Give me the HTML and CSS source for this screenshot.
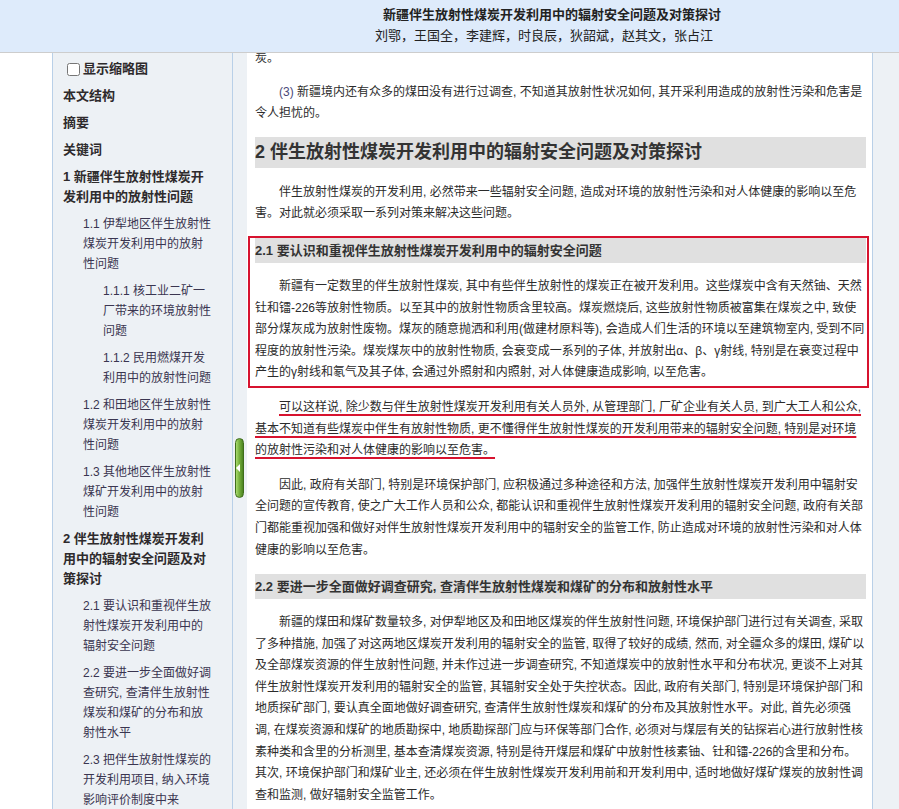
FILE: index.html
```html
<!DOCTYPE html>
<html lang="zh-CN">
<head>
<meta charset="utf-8">
<title>新疆伴生放射性煤炭开发利用中的辐射安全问题及对策探讨</title>
<link rel="stylesheet" href="styles.css">
</head>
<body>
<header class="topbar">
  <div class="title">新疆伴生放射性煤炭开发利用中的辐射安全问题及对策探讨</div>
  <div class="authors">刘鄂，王国全，李建辉，时良辰，狄韶斌，赵其文，张占江</div>
</header>
<div class="workspace">
  <div class="gutter"></div>
  <nav class="toc">
    <label class="toc-item lvl1 check"><input type="checkbox">显示缩略图</label>
    <a class="toc-item lvl1" href="#">本文结构</a>
    <a class="toc-item lvl1" href="#">摘要</a>
    <a class="toc-item lvl1" href="#">关键词</a>
    <a class="toc-item lvl1" href="#">1 新疆伴生放射性煤炭开发利用中的放射性问题</a>
    <a class="toc-item lvl2" href="#">1.1 伊犁地区伴生放射性煤炭开发利用中的放射性问题</a>
    <a class="toc-item lvl3" href="#">1.1.1 核工业二矿一厂带来的环境放射性问题</a>
    <a class="toc-item lvl3" href="#">1.1.2 民用燃煤开发利用中的放射性问题</a>
    <a class="toc-item lvl2" href="#">1.2 和田地区伴生放射性煤炭开发利用中的放射性问题</a>
    <a class="toc-item lvl2" href="#">1.3 其他地区伴生放射性煤矿开发利用中的放射性问题</a>
    <a class="toc-item lvl1" href="#">2 伴生放射性煤炭开发利用中的辐射安全问题及对策探讨</a>
    <a class="toc-item lvl2" href="#">2.1 要认识和重视伴生放射性煤炭开发利用中的辐射安全问题</a>
    <a class="toc-item lvl2" href="#">2.2 要进一步全面做好调查研究, 查清伴生放射性煤炭和煤矿的分布和放射性水平</a>
    <a class="toc-item lvl2" href="#">2.3 把伴生放射性煤炭的开发利用项目, 纳入环境影响评价制度中来</a>
  </nav>
  <div class="splitter"><div class="handle"><span class="arrow"></span></div></div>
  <main class="article">
    <p class="cont">炭。</p>
    <p><span class="num">(3)</span> 新疆境内还有众多的煤田没有进行过调查, 不知道其放射性状况如何, 其开采利用造成的放射性污染和危害是<br>令人担忧的。</p>
    <h3>2 伴生放射性煤炭开发利用中的辐射安全问题及对策探讨</h3>
    <p>伴生放射性煤炭的开发利用, 必然带来一些辐射安全问题, 造成对环境的放射性污染和对人体健康的影响以至危<br>害。对此就必须采取一系列对策来解决这些问题。</p>
    <section class="focus">
      <h4>2.1 要认识和重视伴生放射性煤炭开发利用中的辐射安全问题</h4>
      <p>新疆有一定数里的伴生放射性煤炭, 其中有些伴生放射性的煤炭正在被开发利用。这些煤炭中含有天然铀、天然<br>钍和镭-226等放射性物质。以至其中的放射性物质含里较高。煤炭燃烧后, 这些放射性物质被富集在煤炭之中, 致使<br>部分煤灰成为放射性废物。煤灰的随意抛洒和利用(做建材原料等), 会造成人们生活的环境以至建筑物室内, 受到不同<br>程度的放射性污染。煤炭煤灰中的放射性物质, 会衰变成一系列的子体, 并放射出α、β、γ射线, 特别是在衰变过程中<br>产生的γ射线和氡气及其子体, 会通过外照射和内照射, 对人体健康造成影响, 以至危害。</p>
    </section>
    <p><span class="mark">可以这样说, 除少数与伴生放射性煤炭开发利用有关人员外, 从管理部门, 厂矿企业有关人员, 到广大工人和公众,<br>基本不知道有些煤炭中伴生有放射性物质, 更不懂得伴生放射性煤炭的开发利用带来的辐射安全问题, 特别是对环境<br>的放射性污染和对人体健康的影响以至危害。</span></p>
    <p>因此, 政府有关部门, 特别是环境保护部门, 应积极通过多种途径和方法, 加强伴生放射性煤炭开发利用中辐射安<br>全问题的宣传教育, 使之广大工作人员和公众, 都能认识和重视伴生放射性煤炭开发利用的辐射安全问题, 政府有关部<br>门都能重视加强和做好对伴生放射性煤炭开发利用中的辐射安全的监管工作, 防止造成对环境的放射性污染和对人体<br>健康的影响以至危害。</p>
    <h4>2.2 要进一步全面做好调查研究, 查清伴生放射性煤炭和煤矿的分布和放射性水平</h4>
    <p>新疆的煤田和煤矿数量较多, 对伊犁地区及和田地区煤炭的伴生放射性问题, 环境保护部门进行过有关调查, 采取<br>了多种措施, 加强了对这两地区煤炭开发利用的辐射安全的监管, 取得了较好的成绩, 然而, 对全疆众多的煤田, 煤矿以<br>及全部煤炭资源的伴生放射性问题, 并未作过进一步调查研究, 不知道煤炭中的放射性水平和分布状况, 更谈不上对其<br>伴生放射性煤炭开发利用的辐射安全的监管, 其辐射安全处于失控状态。因此, 政府有关部门, 特别是环境保护部门和<br>地质探矿部门, 要认真全面地做好调查研究, 查清伴生放射性煤炭和煤矿的分布及其放射性水平。对此, 首先必须强<br>调, 在煤炭资源和煤矿的地质勘探中, 地质勘探部门应与环保等部门合作, 必须对与煤层有关的钻探岩心进行放射性核<br>素种类和含里的分析测里, 基本查清煤炭资源, 特别是待开煤层和煤矿中放射性核素铀、钍和镭-226的含里和分布。<br>其次, 环境保护部门和煤矿业主, 还必须在伴生放射性煤炭开发利用前和开发利用中, 适时地做好煤矿煤炭的放射性调<br>查和监测, 做好辐射安全监管工作。</p>
  </main>
  <div class="gutter-right"></div>
</div>
</body>
</html>
```

FILE: styles.css
```css
* {
  box-sizing: border-box;
}

html,
body {
  margin: 0;
  height: 100%;
}

body {
  font-family: "Liberation Sans", "Noto Sans CJK SC", sans-serif;
  color: #2b2b2b;
  background: #ffffff;
  overflow: hidden;
}

.topbar {
  height: 53px;
  background: #deebfb;
  border-bottom: 1px solid #cdcdcd;
  padding: 4px 0 0 205px;
  text-align: center;
  color: #222;
}

.title {
  font-size: 13px;
  font-weight: bold;
  line-height: 21px;
}

.authors {
  font-size: 13px;
  line-height: 22px;
  padding-right: 16px;
}

.workspace {
  display: flex;
  height: calc(100vh - 53px);
}

.gutter {
  width: 52px;
  flex: none;
  background: #ffffff;
}

.toc {
  width: 181px;
  flex: none;
  background: #edf1f5;
  border-left: 1px solid #b9d0e8;
  border-right: 1px solid #b9d0e8;
  padding: 6px 19px 0 10px;
  display: flex;
  flex-direction: column;
  gap: 7px;
  overflow: hidden;
}

.toc-item {
  display: block;
  font-size: 12px;
  line-height: 20px;
  color: #3a3550;
  text-decoration: none;
}

.toc .lvl1 {
  font-size: 13px;
  font-weight: bold;
  color: #2e2a2c;
}

.toc .lvl2 {
  margin-left: 20px;
}

.toc .lvl3 {
  margin-left: 40px;
}

.check {
  display: flex;
  align-items: center;
  height: 20px;
}

.check input {
  margin: 3px 3px 3px 4px;
  width: 13px;
  height: 13px;
}

.splitter {
  width: 14px;
  flex: none;
  background: #edf1f5;
  padding: 385px 0 0 2px;
}

.handle {
  width: 9px;
  height: 60px;
  border-radius: 5px;
  border: 1px solid #3f6d1c;
  background: linear-gradient(to right, #a9dc70, #78b23f 45%, #4c8420);
  display: flex;
  align-items: center;
}

.arrow {
  width: 0;
  height: 0;
  border-top: 4px solid transparent;
  border-bottom: 4px solid transparent;
  border-right: 4px solid #ffffff;
}

.article {
  width: 626px;
  flex: none;
  border-right: 1px solid #b9d0e8;
  padding: 0 6px 0 8px;
  overflow: hidden;
  font-size: 12px;
  line-height: 21.6px;
}

.article p {
  margin: 0 0 13px;
  text-indent: 2em;
}

.article p.cont {
  text-indent: 0;
  margin-top: -5px;
  margin-bottom: 12px;
}

.article .num {
  color: #4a4a7a;
}

.article h3 {
  margin: -1px 0 14px;
  height: 31px;
  font-size: 18px;
  line-height: 31px;
  font-weight: bold;
  color: #333;
  background: #e0e0e0;
}

.article h4 {
  margin: 0 0 13px;
  height: 25px;
  font-size: 13px;
  line-height: 25px;
  font-weight: bold;
  color: #333;
  background: #e0e0e0;
}

.focus {
  border: 2px solid #d7132f;
  margin: -2px -3px 9px -7px;
  padding: 0 1px 2px 5px;
}

.article .focus p {
  margin-bottom: 0;
}

.mark {
  text-decoration: underline;
  text-decoration-color: #d7132f;
  text-decoration-thickness: 2px;
  text-underline-offset: 3px;
}

.gutter-right {
  flex: 1;
  background: #edf1f5;
}
```
